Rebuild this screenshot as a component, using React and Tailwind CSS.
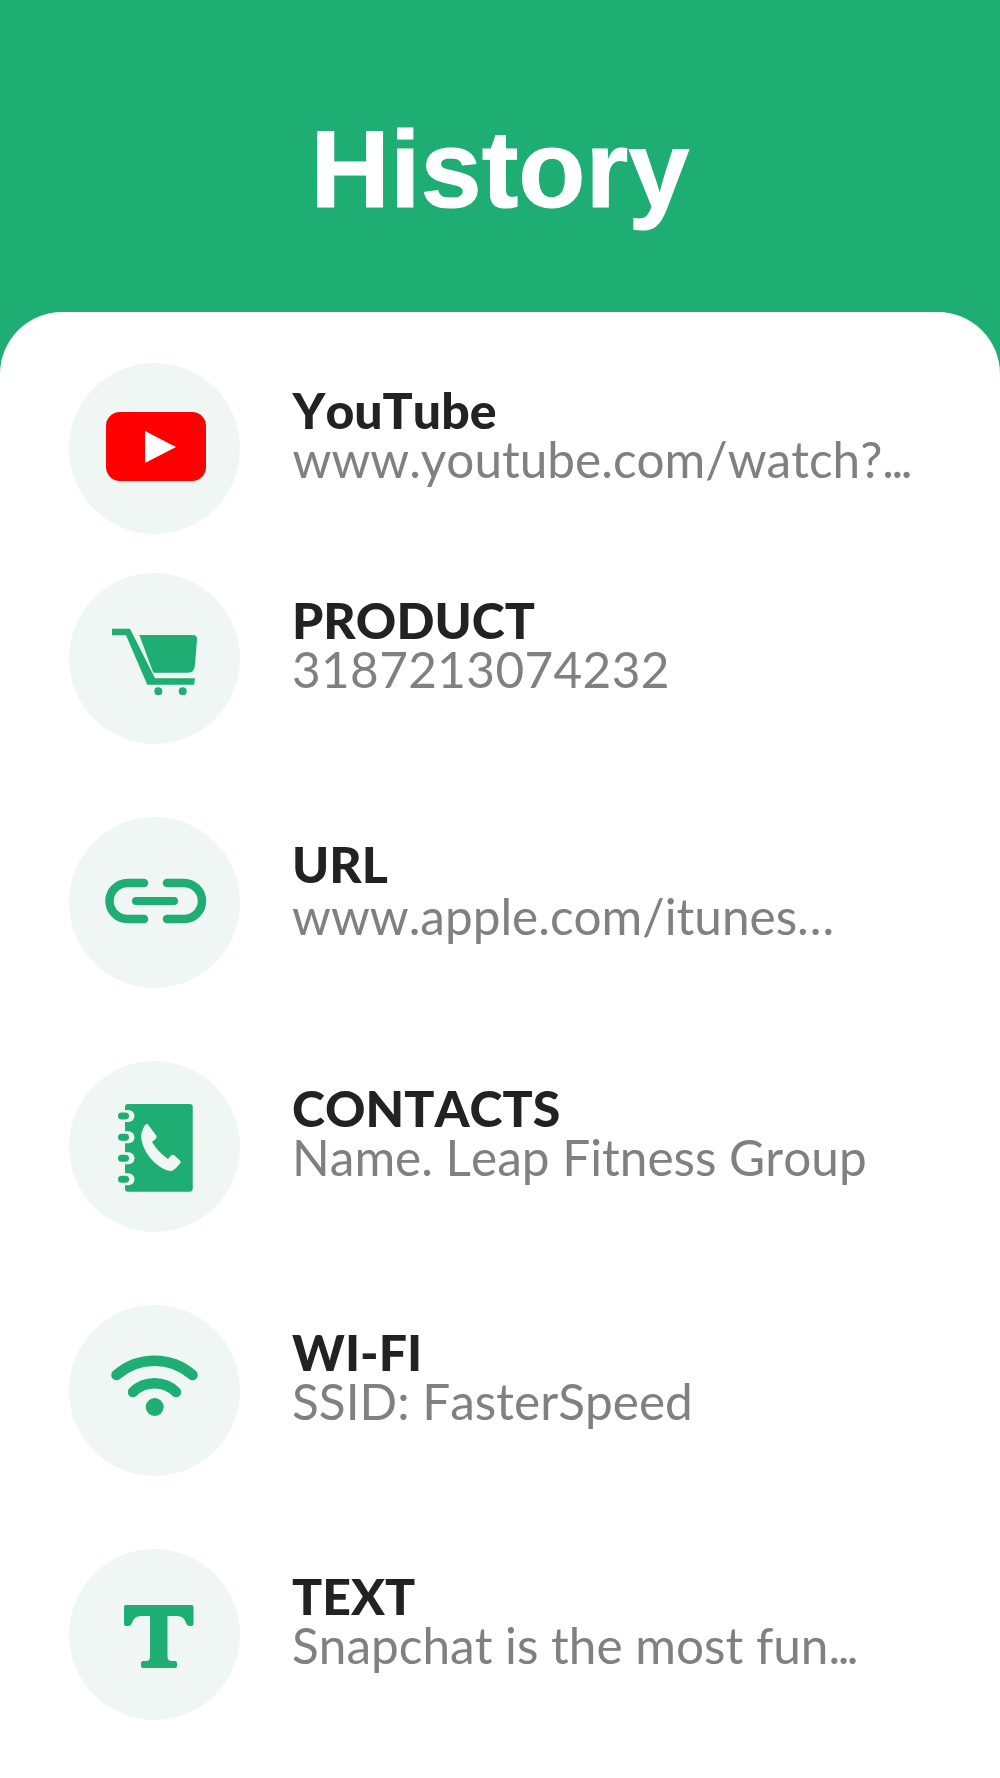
import React from "react";

const GREEN = "#1ead72";

const YoutubeIcon = () => (
  <svg viewBox="0 0 171 171" className="h-full w-full">
    <rect x="37" y="49" width="100" height="69" rx="14" fill="#ff0000" />
    <path d="M76 68 L107 84 L76 100 Z" fill="#fff" />
  </svg>
);

const CartIcon = () => (
  <svg viewBox="0 0 171 171" className="h-full w-full" fill={GREEN}>
    <path d="M43 55.7 H61 L86 105.3 H126 L125 111.7 H78.3 L57 62.3 H43 Z" />
    <path d="M70.3 62 H124 Q128 62 128 66 L126 92 Q125.5 99.7 119 99.7 H84.3 Z" />
    <circle cx="89.3" cy="118.3" r="4" />
    <circle cx="113.7" cy="118.3" r="4" />
  </svg>
);

const LinkIcon = () => (
  <svg viewBox="0 0 171 171" className="h-full w-full" fill="none" stroke={GREEN} strokeWidth="8.5" strokeLinecap="round">
    <path d="M75 66 H58.5 a18 18 0 0 0 0 36 H75" />
    <path d="M98 66 H115 a18 18 0 0 1 0 36 H98" />
    <path d="M67 84 H105" strokeWidth="8" />
  </svg>
);

const ContactsIcon = () => (
  <svg viewBox="0 0 171 171" className="h-full w-full">
    <rect x="56" y="43" width="67.7" height="87.7" rx="3" fill={GREEN} />
    {[55, 76.3, 97.3, 118.3].map((y) => (
      <g key={y}>
        <rect x="50" y={y - 6} width="15.5" height="12" rx="6" fill="#f0f6f4" />
        <rect x="49" y={y - 3.5} width="11" height="7" rx="3.5" fill={GREEN} />
      </g>
    ))}
    <path
      d="M79 63.5 L87.5 75 Q88 77 86.5 78 L83 81 Q89 91 99 98 L102 94.5 Q103.5 93 105.5 94.5 L111 99.5 Q112.5 101 111 102.5 Q107 108 103 110 Q97 111 86 102 Q75 92 72.5 79 Q71 72 76 64 Q78 62.5 79 63.5 Z"
      fill="#f0f6f4"
    />
  </svg>
);

const WifiIcon = () => (
  <svg viewBox="0 0 171 171" className="h-full w-full" fill="none" stroke={GREEN} strokeWidth="10.5" strokeLinecap="round">
    <path d="M47.5 70 A58 58 0 0 1 123.5 70" />
    <path d="M64 87 A31 31 0 0 1 107 87" />
    <circle cx="85.7" cy="102" r="9" fill={GREEN} stroke="none" />
  </svg>
);

const TextIcon = () => (
  <svg viewBox="0 0 171 171" className="h-full w-full" fill={GREEN}>
    <path d="M57 56 H122.5 Q124.5 56 124.5 58 V75 Q124.5 77 122.5 77 H120 Q118 77 117 74 Q115 67 108 67 H98.5 V108 Q98.5 112 103 112 H106 Q108 112 108 114 V117 Q108 119 106 119 H74 Q72 119 72 117 V114 Q72 112 74 112 H77 Q81 112 81 108 V67 H72 Q65 67 63 74 Q62 77 60 77 H57 Q55 77 55 75 V58 Q55 56 57 56 Z" />
  </svg>
);

const items = [
  { title: "YouTube", sub: "www.youtube.com/watch?", dots: true, Icon: YoutubeIcon, gap: "mb-[39px] ml-[0.5px]", subClass: "" },
  { title: "PRODUCT", sub: "3187213074232", Icon: CartIcon, gap: "mb-[73px]", subClass: "tracking-[0.35px]" },
  { title: "URL", sub: "www.apple.com/itunes…", Icon: LinkIcon, gap: "mb-[73px]", subClass: "mt-[3px]" },
  { title: "CONTACTS", sub: "Name. Leap Fitness Group", Icon: ContactsIcon, gap: "mb-[73px]", subClass: "" },
  { title: "WI-FI", sub: "SSID: FasterSpeed", Icon: WifiIcon, gap: "mb-[73px]", subClass: "" },
  { title: "TEXT", sub: "Snapchat is the most fun", dots: true, Icon: TextIcon, gap: "", subClass: "" },
];

const App = () => {
  return (
    <div className="min-h-[1778px] w-full bg-[#1ead72] font-['Lato',sans-serif] [font-kerning:none]">
      {/* Header */}
      <div className="flex h-[312px] justify-center pt-[107px]">
        <h1 className="font-['Liberation_Sans',sans-serif] text-[110px] font-bold leading-[124px] text-white [font-kerning:normal] [-webkit-text-stroke:1px_white]">
          History
        </h1>
      </div>

      {/* History list */}
      <div className="h-[1466px] rounded-t-[62px] bg-white pl-[68.5px] pt-[51px]">
        {items.map(({ title, sub, dots, Icon, gap, subClass }) => (
          <div key={title} className={`flex items-start gap-[52.5px] ${gap}`}>
            <div className="h-[171px] w-[171px] shrink-0 rounded-full bg-[#f0f6f4]">
              <Icon />
            </div>
            <div className="flex flex-col pt-[22px]">
              <span className="text-[50px] font-black leading-[50px] text-[#222222]">{title}</span>
              <span className={`text-[49.5px] font-normal leading-[48px] text-[#808080] ${subClass}`}>
                {sub}
                {dots && <span className="tracking-[-2.5px]">...</span>}
              </span>
            </div>
          </div>
        ))}
      </div>
    </div>
  );
};

export default App;
